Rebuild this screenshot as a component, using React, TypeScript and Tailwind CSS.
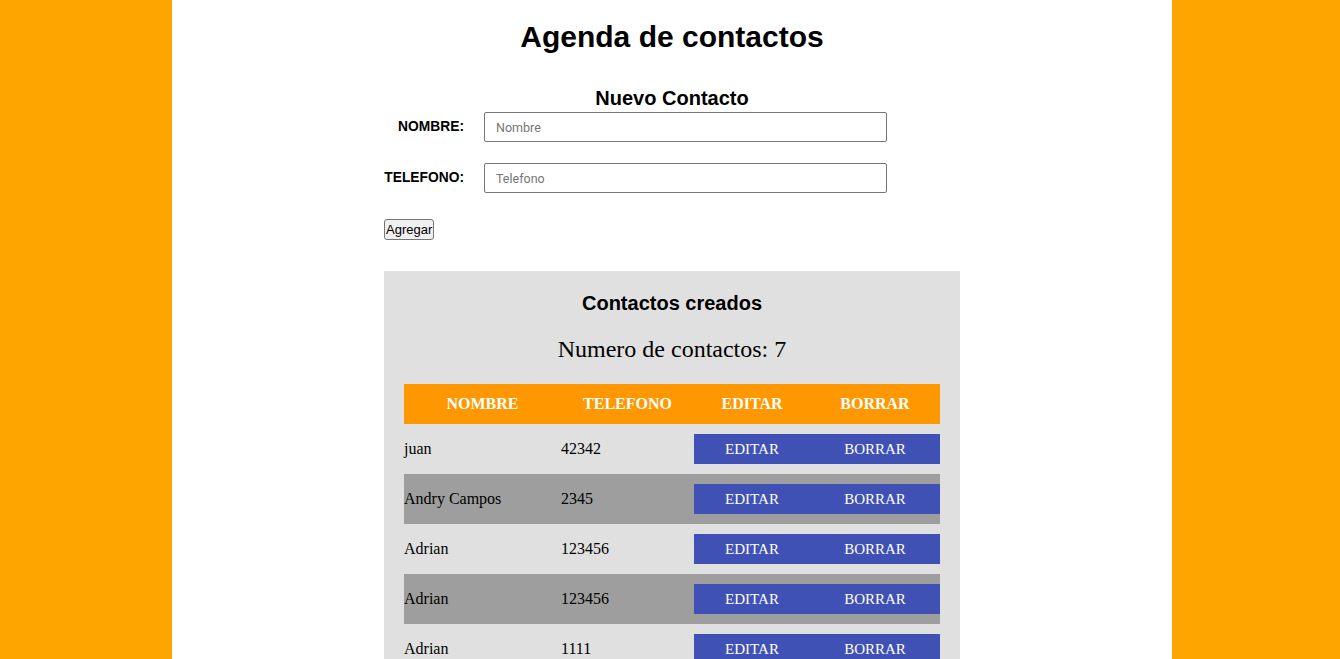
import React from "react";

const contacts = [
  { name: "juan", phone: "42342" },
  { name: "Andry Campos", phone: "2345" },
  { name: "Adrian", phone: "123456" },
  { name: "Adrian", phone: "123456" },
  { name: "Adrian", phone: "1111" },
  { name: "Adrian", phone: "1111" },
  { name: "Adrian", phone: "2222" },
];

const sans = { fontFamily: '"Liberation Sans", Arial, sans-serif' };
const serif = { fontFamily: '"Liberation Serif", "Times New Roman", serif' };

export default function App() {
  return (
    <div className="min-h-screen bg-[#ffa500] flex justify-center pl-[4px]" style={sans}>
      <div className="w-[1000px] bg-white flex flex-col items-center pt-[19px] pb-10">
        <h1 className="text-[30px] leading-[36px] font-bold text-black">Agenda de contactos</h1>

        <div className="w-[576px] mt-[31px] flex flex-col">
          <h2 className="text-[20px] leading-[24px] font-bold text-center text-black">Nuevo Contacto</h2>
          <div className="flex items-center mt-[2px]">
            <label className="w-[80px] text-right text-[13.8px] font-bold text-black">NOMBRE:</label>
            <input
              className="ml-[20px] w-[403px] h-[30px] border border-[#767676] rounded-[2px] px-[11px] text-[12.5px] placeholder:text-[#757575] outline-none"
              style={{ fontFamily: 'Roboto, "Liberation Sans", sans-serif' }}
              placeholder="Nombre"
            />
          </div>
          <div className="flex items-center mt-[21px]">
            <label className="w-[80px] text-right text-[13.8px] font-bold text-black">TELEFONO:</label>
            <input
              className="ml-[20px] w-[403px] h-[30px] border border-[#767676] rounded-[2px] px-[11px] text-[12.5px] placeholder:text-[#757575] outline-none"
              style={{ fontFamily: 'Roboto, "Liberation Sans", sans-serif' }}
              placeholder="Telefono"
            />
          </div>
          <div className="mt-[26px] flex">
            <button className="h-[21px] px-[1px] bg-[#efefef] border border-[#767676] rounded-[3px] text-[13px] leading-[17px] text-black whitespace-nowrap">
              Agregar
            </button>
          </div>
        </div>

        <div className="w-[576px] mt-[31px] bg-[#e0e0e0] px-[20px] pt-[20px] pb-[20px]">
          <h2 className="text-[20px] leading-[24px] font-bold text-center text-black">Contactos creados</h2>
          <p className="mt-[20px] text-[24px] leading-[28px] text-center text-black" style={serif}>
            Numero de contactos: {contacts.length}
          </p>
          <div className="mt-[21px] grid grid-cols-[157px_133px_116px_130px]" style={serif}>
            <div className="h-[40px] bg-[#ff9800] text-white font-bold text-[16px] flex items-center justify-center">NOMBRE</div>
            <div className="h-[40px] bg-[#ff9800] text-white font-bold text-[16px] flex items-center justify-center">TELEFONO</div>
            <div className="h-[40px] bg-[#ff9800] text-white font-bold text-[16px] flex items-center justify-center">EDITAR</div>
            <div className="h-[40px] bg-[#ff9800] text-white font-bold text-[16px] flex items-center justify-center">BORRAR</div>
            {contacts.map((c, i) => {
              const bg = i % 2 === 1 ? "bg-[#9e9e9e]" : "bg-[#e0e0e0]";
              return (
                <React.Fragment key={i}>
                  <div className={`${bg} h-[50px] flex items-center text-[16px] text-black`}>{c.name}</div>
                  <div className={`${bg} h-[50px] flex items-center text-[16px] text-black`}>{c.phone}</div>
                  <div className={`${bg} h-[50px] flex items-center`}>
                    <button className="w-full h-[30px] bg-[#3f51b5] text-white text-[15px]" style={serif}>EDITAR</button>
                  </div>
                  <div className={`${bg} h-[50px] flex items-center`}>
                    <button className="w-full h-[30px] bg-[#3f51b5] text-white text-[15px]" style={serif}>BORRAR</button>
                  </div>
                </React.Fragment>
              );
            })}
          </div>
        </div>
      </div>
    </div>
  );
}
